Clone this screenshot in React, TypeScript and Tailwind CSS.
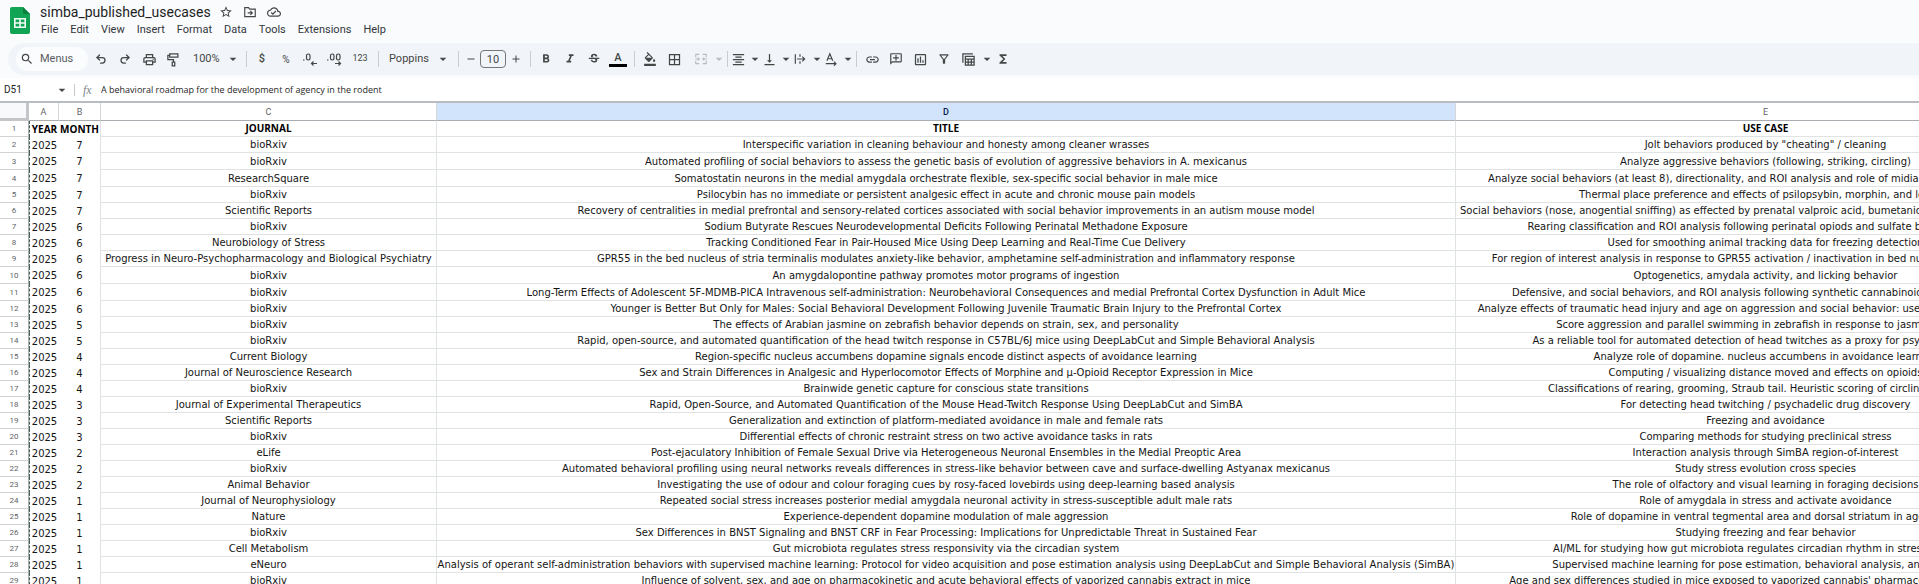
import type { ReactNode } from 'react';
import { Redo2, Undo2 } from 'lucide-react';
import {
  MdAdd,
  MdArrowDropDown,
  MdBorderAll,
  MdFormatAlignCenter,
  MdFormatBold,
  MdFormatColorFill,
  MdFormatItalic,
  MdFunctions,
  MdInsertLink,
  MdOutlineAddComment,
  MdOutlineCloudDone,
  MdOutlineFilterAlt,
  MdOutlineInsertChart,
  MdOutlinePrint,
  MdRemove,
  MdSearch,
  MdStarBorder,
  MdStrikethroughS,
  MdVerticalAlignBottom,
} from 'react-icons/md';

type Row = {
  month: number;
  journal: string;
  title: string;
  useCase: string;
  tall?: boolean;
};

const rows: Row[] = [
  { month: 7, journal: 'bioRxiv', title: 'Interspecific variation in cleaning behaviour and honesty among cleaner wrasses', useCase: 'Jolt behaviors produced by "cheating" / cleaning' },
  { month: 7, journal: 'bioRxiv', title: 'Automated profiling of social behaviors to assess the genetic basis of evolution of aggressive behaviors in A. mexicanus', useCase: 'Analyze aggressive behaviors (following, striking, circling)', tall: true },
  { month: 7, journal: 'ResearchSquare', title: 'Somatostatin neurons in the medial amygdala orchestrate flexible, sex-specific social behavior in male mice', useCase: 'Analyze social behaviors (at least 8), directionality, and ROI analysis and role of midial amygdala somatostatin', tall: true },
  { month: 7, journal: 'bioRxiv', title: 'Psilocybin has no immediate or persistent analgesic effect in acute and chronic mouse pain models', useCase: 'Thermal place preference and effects of psilopsybin, morphin, and loading' },
  { month: 7, journal: 'Scientific Reports', title: 'Recovery of centralities in medial prefrontal and sensory-related cortices associated with social behavior improvements in an autism mouse model', useCase: 'Social behaviors (nose, anogential sniffing) as effected by prenatal valproic acid, bumetanide and prefrontal activity state' },
  { month: 6, journal: 'bioRxiv', title: 'Sodium Butyrate Rescues Neurodevelopmental Deficits Following Perinatal Methadone Exposure', useCase: 'Rearing classification and ROI analysis following perinatal opiods and sulfate based treatments' },
  { month: 6, journal: 'Neurobiology of Stress', title: 'Tracking Conditioned Fear in Pair-Housed Mice Using Deep Learning and Real-Time Cue Delivery', useCase: 'Used for smoothing animal tracking data for freezing detection' },
  { month: 6, journal: 'Progress in Neuro-Psychopharmacology and Biological Psychiatry', title: 'GPR55 in the bed nucleus of stria terminalis modulates anxiety-like behavior, amphetamine self-administration and inflammatory response', useCase: 'For region of interest analysis in response to GPR55 activation / inactivation in bed nucleus of stria terminalis' },
  { month: 6, journal: 'bioRxiv', title: 'An amygdalopontine pathway promotes motor programs of ingestion', useCase: 'Optogenetics, amydala activity, and licking behavior', tall: true },
  { month: 6, journal: 'bioRxiv', title: 'Long-Term Effects of Adolescent 5F-MDMB-PICA Intravenous self-administration: Neurobehavioral Consequences and medial Prefrontal Cortex Dysfunction in Adult Mice', useCase: 'Defensive, and social behaviors, and ROI analysis following synthetic cannabinoid self-administration', tall: true },
  { month: 6, journal: 'bioRxiv', title: 'Younger is Better But Only for Males: Social Behavioral Development Following Juvenile Traumatic Brain Injury to the Prefrontal Cortex', useCase: 'Analyze effects of traumatic head injury and age on aggression and social behavior: used SimBA for attack scoring' },
  { month: 5, journal: 'bioRxiv', title: 'The effects of Arabian jasmine on zebrafish behavior depends on strain, sex, and personality', useCase: 'Score aggression and parallel swimming in zebrafish in response to jasmine extract' },
  { month: 5, journal: 'bioRxiv', title: 'Rapid, open-source, and automated quantification of the head twitch response in C57BL/6J mice using DeepLabCut and Simple Behavioral Analysis', useCase: 'As a reliable tool for automated detection of head twitches as a proxy for psychedelic effects' },
  { month: 4, journal: 'Current Biology', title: 'Region-specific nucleus accumbens dopamine signals encode distinct aspects of avoidance learning', useCase: 'Analyze role of dopamine. nucleus accumbens in avoidance learning' },
  { month: 4, journal: 'Journal of Neuroscience Research', title: 'Sex and Strain Differences in Analgesic and Hyperlocomotor Effects of Morphine and μ-Opioid Receptor Expression in Mice', useCase: 'Computing / visualizing distance moved and effects on opioids' },
  { month: 4, journal: 'bioRxiv', title: 'Brainwide genetic capture for conscious state transitions', useCase: 'Classifications of rearing, grooming, Straub tail. Heuristic scoring of circling and groom' },
  { month: 3, journal: 'Journal of Experimental Therapeutics', title: 'Rapid, Open-Source, and Automated Quantification of the Mouse Head-Twitch Response Using DeepLabCut and SimBA', useCase: 'For detecting head twitching / psychadelic drug discovery' },
  { month: 3, journal: 'Scientific Reports', title: 'Generalization and extinction of platform-mediated avoidance in male and female rats', useCase: 'Freezing and avoidance' },
  { month: 3, journal: 'bioRxiv', title: 'Differential effects of chronic restraint stress on two active avoidance tasks in rats', useCase: 'Comparing methods for studying preclinical stress' },
  { month: 2, journal: 'eLife', title: 'Post-ejaculatory Inhibition of Female Sexual Drive via Heterogeneous Neuronal Ensembles in the Medial Preoptic Area', useCase: 'Interaction analysis through SimBA region-of-interest' },
  { month: 2, journal: 'bioRxiv', title: 'Automated behavioral profiling using neural networks reveals differences in stress-like behavior between cave and surface-dwelling Astyanax mexicanus', useCase: 'Study stress evolution cross species' },
  { month: 2, journal: 'Animal Behavior', title: 'Investigating the use of odour and colour foraging cues by rosy-faced lovebirds using deep-learning based analysis', useCase: 'The role of olfactory and visual learning in foraging decisions' },
  { month: 1, journal: 'Journal of Neurophysiology', title: 'Repeated social stress increases posterior medial amygdala neuronal activity in stress-susceptible adult male rats', useCase: 'Role of amygdala in stress and activate avoidance' },
  { month: 1, journal: 'Nature', title: 'Experience-dependent dopamine modulation of male aggression', useCase: 'Role of dopamine in ventral tegmental area and dorsal striatum in aggression' },
  { month: 1, journal: 'bioRxiv', title: 'Sex Differences in BNST Signaling and BNST CRF in Fear Processing: Implications for Unpredictable Threat in Sustained Fear', useCase: 'Studying freezing and fear behavior' },
  { month: 1, journal: 'Cell Metabolism', title: 'Gut microbiota regulates stress responsivity via the circadian system', useCase: 'AI/ML for studying how gut microbiota regulates circadian rhythm in stress resilience' },
  { month: 1, journal: 'eNeuro', title: 'Analysis of operant self-administration behaviors with supervised machine learning: Protocol for video acquisition and pose estimation analysis using DeepLabCut and Simple Behavioral Analysis (SimBA)', useCase: 'Supervised machine learning for pose estimation, behavioral analysis, and validation' },
  { month: 1, journal: 'bioRxiv', title: 'Influence of solvent, sex, and age on pharmacokinetic and acute behavioral effects of vaporized cannabis extract in mice', useCase: "Age and sex differences studied in mice exposed to vaporized cannabis' pharmacokinetics and effects" },
];

const menus = ['File', 'Edit', 'View', 'Insert', 'Format', 'Data', 'Tools', 'Extensions', 'Help'];

function SheetsLogo() {
  return (
    <svg viewBox="0 0 20 27" className="h-[27px] w-5" aria-hidden="true">
      <path d="M2 0h11l7 7v18a2 2 0 0 1-2 2H2a2 2 0 0 1-2-2V2a2 2 0 0 1 2-2z" fill="#12a455" />
      <path d="M13 0l7 7h-5.500a1.500 1.500 0 0 1-1.500-1.500z" fill="#0b7f40" />
      <path d="M4 11h12v10H4z M5.600 12.600v2.600h3.600v-2.600z M10.800 12.600v2.600h3.600v-2.600z M5.600 16.800v2.600h3.600v-2.600z M10.800 16.800v2.600h3.600v-2.600z" fill="#f1fbf5" fillRule="evenodd" />
    </svg>
  );
}

function Stroke({ children, className = 'size-4' }: { children: ReactNode; className?: string }) {
  return (
    <svg viewBox="0 0 24 24" fill="none" stroke="currentColor" strokeWidth="2" className={className} aria-hidden="true">
      {children}
    </svg>
  );
}

function Tool({ label, children }: { label: string; children: ReactNode }) {
  return (
    <button type="button" aria-label={label} className="flex h-6 w-6 shrink-0 items-center justify-center">
      {children}
    </button>
  );
}

function MenuTool({ label, children, className = 'w-7' }: { label: string; children: ReactNode; className?: string }) {
  return (
    <button type="button" aria-label={label} className={`flex h-6 shrink-0 items-center justify-between ${className}`}>
      {children}
      <MdArrowDropDown className="-mr-1 size-4 shrink-0" />
    </button>
  );
}

function Divider() {
  return (
    <span className="flex w-2 shrink-0 justify-center">
      <span className="h-4 w-px bg-[#c9ccd1]" />
    </span>
  );
}

function Toolbar() {
  return (
    <div role="toolbar" aria-label="Main" className="ml-2 flex h-8 items-center rounded-l-full bg-[#f1f5f9] pl-2 text-[#444746]">
      <label className="mr-[1px] flex h-6 w-[72px] items-center rounded-full bg-[#fbfcfe] pl-1">
        <MdSearch className="size-[14px] shrink-0" />
        <input aria-label="Search the menus" placeholder="Menus" className="ml-[6px] w-10 bg-transparent text-[11px] outline-none placeholder:text-[#5a5d61]" />
      </label>
      <Tool label="Undo"><Undo2 className="size-3" strokeWidth={2.5} /></Tool>
      <Tool label="Redo"><Redo2 className="size-3" strokeWidth={2.5} /></Tool>
      <Tool label="Print"><MdOutlinePrint className="size-[15px]" /></Tool>
      <Tool label="Paint format">
        <Stroke className="size-[15px]">
          <path d="M6 3h13v5H6zM6 5.500H3V12h9v4M10 16h4v6h-4z" />
        </Stroke>
      </Tool>
      <label className="flex w-[57px] shrink-0 items-center pl-2">
        <select aria-label="Zoom" className="w-8 appearance-none bg-transparent text-[11px] outline-none">
          <option>100%</option>
        </select>
        <MdArrowDropDown className="size-4 shrink-0" />
      </label>
      <Divider />
      <button type="button" className="w-6 shrink-0 text-[11px] font-medium">$</button>
      <button type="button" className="w-6 shrink-0 text-[10px]">%</button>
      <Tool label="Decrease decimal places">
        <svg viewBox="0 0 16 14" className="h-[14px] w-4" fill="none" stroke="currentColor" strokeWidth="1.200" aria-hidden="true">
          <path d="M1 8h1.500" />
          <rect x="4.500" y="2" width="3.500" height="6" rx="1.700" />
          <path d="M15 11.500H9.500M11.500 9.500l-2 2 2 2" />
        </svg>
      </Tool>
      <Tool label="Increase decimal places">
        <svg viewBox="0 0 16 14" className="h-[14px] w-4" fill="none" stroke="currentColor" strokeWidth="1.200" aria-hidden="true">
          <path d="M1 8h1.500" />
          <rect x="4.500" y="2" width="3.500" height="6" rx="1.700" />
          <rect x="10.500" y="2" width="3.500" height="6" rx="1.700" />
          <path d="M9 11.500h5.500M12.500 9.500l2 2-2 2" />
        </svg>
      </Tool>
      <button type="button" className="w-7 shrink-0 text-[9px]">123</button>
      <Divider />
      <label className="flex w-[72px] shrink-0 items-center pl-[7px]">
        <select aria-label="Font" className="w-[46px] appearance-none bg-transparent text-[11px] outline-none">
          <option>Poppins</option>
        </select>
        <MdArrowDropDown className="size-4 shrink-0" />
      </label>
      <Divider />
      <button type="button" aria-label="Decrease font size" className="flex w-[18px] shrink-0 justify-center"><MdRemove className="size-3" /></button>
      <input aria-label="Font size" defaultValue="10" className="h-[18px] w-[26px] shrink-0 rounded-sm border border-[#747775] bg-transparent text-center text-[11px] outline-none" />
      <button type="button" aria-label="Increase font size" className="flex w-5 shrink-0 justify-center"><MdAdd className="size-3" /></button>
      <Divider />
      <Tool label="Bold"><MdFormatBold className="size-[14px]" /></Tool>
      <Tool label="Italic"><MdFormatItalic className="size-[14px]" /></Tool>
      <Tool label="Strikethrough"><MdStrikethroughS className="size-[14px]" /></Tool>
      <Tool label="Text color">
        <span className="flex w-[18px] flex-col items-center border-b-[3px] border-black text-[11px] leading-[13px] font-medium">A</span>
      </Tool>
      <Divider />
      <Tool label="Fill color"><MdFormatColorFill className="size-[14px]" /></Tool>
      <Tool label="Borders"><MdBorderAll className="size-[15px]" /></Tool>
      <MenuTool label="Merge cells" className="w-[37px] pl-2 text-[#b9bcc0]">
        <Stroke className="size-[14px]">
          <path d="M9 4H3v5M15 4h6v5M9 20H3v-5M15 20h6v-5M2 12h7M22 12h-7M6.500 9.500 9 12l-2.500 2.500M17.500 9.500 15 12l2.500 2.500" />
        </Stroke>
      </MenuTool>
      <Divider />
      <div className="flex shrink-0 gap-[3px]">
        <MenuTool label="Horizontal align"><MdFormatAlignCenter className="size-[15px]" /></MenuTool>
        <MenuTool label="Vertical align"><MdVerticalAlignBottom className="size-[15px]" /></MenuTool>
        <MenuTool label="Text wrapping">
          <Stroke className="size-[14px]">
            <path d="M4 4v16M12 4v4M12 16v4M7 12h13M16 8l4 4-4 4" />
          </Stroke>
        </MenuTool>
        <MenuTool label="Text rotation">
          <Stroke className="size-[14px]">
            <path d="M5 15 10 3l5 12M7 11.500h6M3 20h17M17 16.500l3.500 3.500-3.500 3.500" />
          </Stroke>
        </MenuTool>
      </div>
      <Divider />
      <Tool label="Insert link"><MdInsertLink className="size-[15px]" /></Tool>
      <Tool label="Insert comment"><MdOutlineAddComment className="size-[14px] -scale-x-100" /></Tool>
      <Tool label="Insert chart"><MdOutlineInsertChart className="size-[15px]" /></Tool>
      <Tool label="Create a filter"><MdOutlineFilterAlt className="size-[14px]" /></Tool>
      <MenuTool label="Table views" className="w-[35px] pl-[5px]">
        <Stroke className="size-[15px]">
          <path d="M3 17V3h16M7 7h14v14H7zM7 11.500h14M7 16h14M11.500 11.500V21M16.500 11.500V21" />
        </Stroke>
      </MenuTool>
      <Tool label="Functions"><MdFunctions className="size-[14px]" /></Tool>
    </div>
  );
}

const letter = 'h-[18px] border-r border-b border-r-[#d5d7da] border-b-[#a9acb1] p-0 text-[9px] leading-4 font-normal';
const gridCell = 'border-r border-b border-[#e0e3e4] p-0 text-center';
const numberCell = 'border-r border-b border-r-[#a9acb1] border-b-[#d0d3d6] p-0 text-center font-[Roboto,sans-serif] text-[8px] font-normal text-[#5f6368]';
const yearCell = 'border-l border-dashed border-[#47604f] p-0 text-center';
const monthCell = 'border-r border-[#e0e3e4] p-0 text-center';

function Grid() {
  return (
    <div className="min-h-0 flex-1 overflow-hidden border-t-2 border-[#b9bcc0]">
      <table className="w-[2076px] table-fixed border-separate border-spacing-0 font-['DejaVu_Sans',sans-serif] text-[10px] leading-[15px] whitespace-nowrap text-[#151515]">
        <colgroup>
          <col className="w-[29px]" />
          <col className="w-[30px]" />
          <col className="w-[42px]" />
          <col className="w-[336px]" />
          <col className="w-[1019px]" />
          <col className="w-[620px]" />
        </colgroup>
        <thead className="font-[Roboto,sans-serif] text-[#5f6368]">
          <tr>
            <td className="h-[18px] border-r-[3px] border-b-[3px] border-[#c3c5c8] bg-[#f8f9fa] p-0" />
            <th scope="col" className={letter}>A</th>
            <th scope="col" className={letter}>B</th>
            <th scope="col" className={letter}>C</th>
            <th scope="col" className={`${letter} bg-[#d1e4fb] text-[#041e49]`}><span className="font-medium">D</span></th>
            <th scope="col" className={letter}>E</th>
          </tr>
        </thead>
        <tbody>
          <tr className="h-4 font-['Open_Sans',sans-serif] font-bold text-black">
            <th scope="row" className={numberCell}>1</th>
            <td className={yearCell}>YEAR</td>
            <td className={monthCell}>MONTH</td>
            <td className={gridCell}>JOURNAL</td>
            <td className={gridCell}>TITLE</td>
            <td className={gridCell}>USE CASE</td>
          </tr>
          {rows.map((row, index) => (
            <tr key={index} className={row.tall ? 'h-[17px]' : 'h-4'}>
              <th scope="row" className={numberCell}>{index + 2}</th>
              <td className={yearCell}>2025</td>
              <td className={monthCell}>{row.month}</td>
              <td className={gridCell}>{row.journal}</td>
              <td className={gridCell}>{row.title}</td>
              <td className={gridCell}>{row.useCase}</td>
            </tr>
          ))}
        </tbody>
      </table>
    </div>
  );
}

export default function App() {
  return (
    <div className="flex h-screen flex-col overflow-hidden bg-white font-[Roboto,sans-serif] text-[#1f1f1f]">
      <header className="shrink-0 bg-[#f9fbfd] pb-[3px]">
        <div className="flex pt-[2px] pl-[10px]">
          <a href="#home" aria-label="Sheets home" className="mt-[5px] block"><SheetsLogo /></a>
          <div className="ml-[10px]">
            <div className="flex h-5 items-center text-[#444746]">
              <input aria-label="Rename" defaultValue="simba_published_usecases" className="w-[172px] bg-transparent text-[14px] text-[#1f1f1f] outline-none" />
              <button type="button" aria-label="Star" className="ml-[2px] flex w-6 justify-center"><MdStarBorder className="size-[14px]" /></button>
              <button type="button" aria-label="Move" className="flex w-6 justify-center">
                <Stroke className="size-[14px]">
                  <path d="M3 4.500h6.500l2 2.500H21v13H3zM8 13.500h8M12.500 10l3.500 3.500-3.500 3.500" />
                </Stroke>
              </button>
              <button type="button" aria-label="See document status" className="flex w-6 justify-center"><MdOutlineCloudDone className="size-[14px]" /></button>
            </div>
            <nav aria-label="Menu bar" className="flex h-4 items-center gap-3 pl-[1px] text-[11px] text-[#33363a]">
              {menus.map((menu) => (
                <button type="button" key={menu}>{menu}</button>
              ))}
            </nav>
          </div>
        </div>
        <div className="pt-[5px]">
          <Toolbar />
        </div>
      </header>
      <div className="flex h-[23px] shrink-0 items-center text-[#444746]">
        <input aria-label="Name box" defaultValue="D51" className="ml-1 w-[50px] bg-transparent text-[10px] text-[#1f1f1f] outline-none" />
        <button type="button" aria-label="Named ranges" className="flex w-4 justify-center"><MdArrowDropDown className="size-4 shrink-0" /></button>
        <span className="ml-1 h-3 w-px bg-[#c7c9cc]" />
        <span className="ml-2 w-[10px] font-['Liberation_Serif',serif] text-[12px] text-[#80868b] italic">fx</span>
        <input aria-label="Formula" defaultValue="A behavioral roadmap for the development of agency in the rodent" className="ml-2 min-w-0 flex-1 bg-transparent font-['Open_Sans',sans-serif] text-[9px] text-[#1f1f1f] outline-none" />
      </div>
      <Grid />
    </div>
  );
}
